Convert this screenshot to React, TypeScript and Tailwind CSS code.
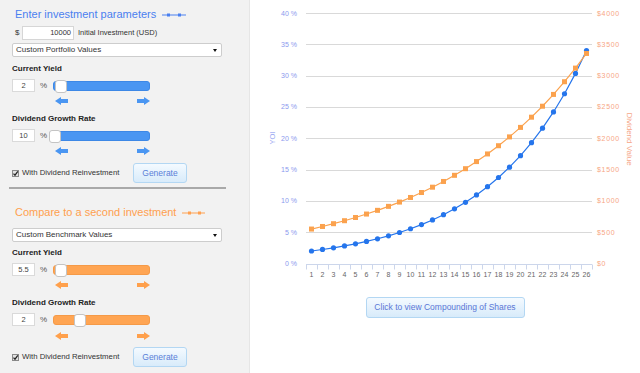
const blue = Array.from({ length: 26 }, (_, n) => 2 * Math.pow(1.12, n));
const orange = Array.from({ length: 26 }, (_, n) => 5.5 * Math.pow(1.075, n));

// plot area in chart-local coords
const X0 = 56;
const X1 = 342;
const CW = (X1 - X0) / 26;
const yOf = (v: number) => 263.5 - v * 6.2625;
const cx = (i: number) => X0 + (i + 0.5) * CW;

const ArrowLeft = ({ color }: { color: string }) => (
  <svg width="13" height="8" viewBox="0 0 13 8">
    <polygon points="0,4 6,0 6,2 13,2 13,6 6,6 6,8" fill={color} />
  </svg>
);

const ArrowRight = ({ color }: { color: string }) => (
  <svg width="13" height="8" viewBox="0 0 13 8">
    <polygon points="13,4 7,0 7,2 0,2 0,6 7,6 7,8" fill={color} />
  </svg>
);

const Slider = ({
  width,
  thumb,
  orange: isOrange,
}: {
  width: string;
  thumb: string;
  orange?: boolean;
}) => (
  <div
    className={`relative h-[10px] rounded-[3px] border ${width} ${
      isOrange ? 'bg-[#ffa553] border-[#f59a48]' : 'bg-[#4a96f2] border-[#3d88e6]'
    }`}
  >
    <div
      className={`absolute top-[-2px] h-[13px] w-[12px] rounded-[3px] border border-[#c4c4c4] bg-white ${thumb}`}
    />
  </div>
);

const SliderRow = ({
  value,
  pctWidth,
  sliderWidth,
  thumb,
  isOrange,
}: {
  value: string;
  pctWidth: string;
  sliderWidth: string;
  thumb: string;
  isOrange?: boolean;
}) => (
  <div className="flex h-[13px] items-center">
    <div className="flex h-[13px] w-[23px] items-center justify-center border border-[#dadada] bg-white text-[7.5px] text-[#444]">
      {value}
    </div>
    <span className={`pl-[5px] text-[8px] text-[#555] ${pctWidth}`}>%</span>
    <Slider width={sliderWidth} thumb={thumb} orange={isOrange} />
  </div>
);

const Arrows = ({ color }: { color: string }) => (
  <div className="flex h-[8px] pl-[43px]">
    <ArrowLeft color={color} />
    <div className="ml-[69px]">
      <ArrowRight color={color} />
    </div>
  </div>
);

const Label = ({ children }: { children: string }) => (
  <div className="h-[10px] text-[8px] font-bold leading-[10px] text-[#222]">{children}</div>
);

const Select = ({ children }: { children: string }) => (
  <div className="flex h-[14px] w-[210px] items-center justify-between rounded-[2px] border border-[#cdcdcd] bg-white pl-[3px] pr-[4px] text-[8px] text-[#333]">
    <span>{children}</span>
    <svg width="4" height="3" viewBox="0 0 4 3">
      <polygon points="0,0 4,0 2,3" fill="#111" />
    </svg>
  </div>
);

const CheckRow = () => (
  <div className="flex h-[20px] w-[175px] items-center justify-between">
    <div className="flex items-center">
      <svg width="7" height="7" viewBox="0 0 7 7">
        <rect x="0.5" y="0.5" width="6" height="6" fill="#e2e2e2" stroke="#8a8a8a" />
        <path d="M1.5 3.6 L3 5.2 L5.8 1.4" stroke="#222" strokeWidth="1.2" fill="none" />
      </svg>
      <span className="ml-[3px] text-[7.75px] text-[#333]">With Dividend Reinvestment</span>
    </div>
    <button className="h-[20px] w-[54px] rounded-[3px] border border-[#b3d7f3] bg-gradient-to-b from-[#f4faff] to-[#d8ebfa] text-[8.5px] text-[#5a7fd8]">
      Generate
    </button>
  </div>
);

const Chart = () => (
  <svg width="390" height="285" viewBox="0 0 390 285" fontFamily="'Liberation Sans', Arial, sans-serif">
    {[5, 10, 15, 20, 25, 30, 35, 40].map((v) => (
      <line
        key={v}
        x1={X0}
        x2={X1}
        y1={Math.round(yOf(v)) + 0.5}
        y2={Math.round(yOf(v)) + 0.5}
        stroke="#d9d9d9"
      />
    ))}
    <line x1={X0} x2={X1} y1={264.5} y2={264.5} stroke="#ccd6eb" />
    {Array.from({ length: 27 }, (_, i) => (
      <line
        key={i}
        x1={Math.round(X0 + i * CW) + 0.5}
        x2={Math.round(X0 + i * CW) + 0.5}
        y1={264.5}
        y2={269.5}
        stroke="#ccd6eb"
      />
    ))}
    {Array.from({ length: 26 }, (_, i) => (
      <text key={i} x={cx(i)} y={277} fontSize="7" fill="#666" textAnchor="middle">
        {i + 1}
      </text>
    ))}
    {[0, 5, 10, 15, 20, 25, 30, 35, 40].map((v) => (
      <text key={v} x={47} y={yOf(v) + 2.5} fontSize="7" fill="#8b99ee" textAnchor="end">
        {v} %
      </text>
    ))}
    {[0, 5, 10, 15, 20, 25, 30, 35, 40].map((v) => (
      <text key={v} x={347} y={yOf(v) + 2.5} fontSize="7" fill="#f7a684" letterSpacing="0.7">
        ${v * 100}
      </text>
    ))}
    <text x={25} y={138} fontSize="7.5" fill="#98a6f2" textAnchor="middle" transform="rotate(-90 25 138)">
      YOI
    </text>
    <text x={377} y={139} fontSize="8" fill="#f6a889" textAnchor="middle" transform="rotate(90 377 139)">
      Dividend Value
    </text>

    <polyline
      points={blue.map((v, i) => `${cx(i)},${yOf(v)}`).join(' ')}
      fill="none"
      stroke="#2575ec"
      strokeWidth="1.2"
    />
    {blue.map((v, i) => (
      <circle key={i} cx={cx(i)} cy={yOf(v)} r="2.6" fill="#2575ec" />
    ))}
    <polyline
      points={orange.map((v, i) => `${cx(i)},${yOf(v)}`).join(' ')}
      fill="none"
      stroke="#fba24e"
      strokeWidth="1.2"
    />
    {orange.map((v, i) => (
      <rect key={i} x={cx(i) - 2.5} y={yOf(v) - 2.5} width="5" height="5" fill="#fba24e" />
    ))}
  </svg>
);

const App = () => {
  return (
    <div className="flex h-[373px] w-[640px] overflow-hidden bg-white font-['Liberation_Sans',Arial,sans-serif]">
      {/* === Left: parameters === */}
      <div className="h-full w-[250px] shrink-0 border-r border-[#e6e6e6] bg-[#f2f2f2] pl-[12px] pt-[8px]">
        {/* first investment */}
        <div className="ml-[3px] flex h-[13px] items-center">
          <span className="text-[11px] leading-[13px] text-[#4a80f0]">Enter investment parameters</span>
          <svg width="24" height="6" viewBox="0 0 24 6" className="ml-[6px]">
            <line x1="0" x2="24" y1="3" y2="3" stroke="#4a80f0" />
            <rect x="5" y="1.5" width="3" height="3" fill="#4a80f0" />
            <rect x="16" y="1.5" width="3" height="3" fill="#4a80f0" />
          </svg>
        </div>
        <div className="mt-[5px] flex h-[14px] items-center">
          <span className="ml-[3px] w-[7px] text-[8px] text-[#333]">$</span>
          <div className="flex h-[14px] w-[52px] items-center justify-end border border-[#d6d6d6] bg-white pr-[2px] text-[7.5px] text-[#333]">
            10000
          </div>
          <span className="ml-[4px] text-[7.5px] text-[#333]">Initial Investment (USD)</span>
        </div>
        <div className="mt-[3px]">
          <Select>Custom Portfolio Values</Select>
        </div>
        <div className="mt-[7px]">
          <Label>Current Yield</Label>
        </div>
        <div className="mt-[5px]">
          <SliderRow value="2" pctWidth="w-[18px]" sliderWidth="w-[97px]" thumb="left-[1px]" />
        </div>
        <div className="mt-[5px]">
          <Arrows color="#4a96f2" />
        </div>
        <div className="mt-[9px]">
          <Label>Dividend Growth Rate</Label>
        </div>
        <div className="mt-[5px]">
          <SliderRow value="10" pctWidth="w-[14px]" sliderWidth="w-[101px]" thumb="left-[-1px]" />
        </div>
        <div className="mt-[5px]">
          <Arrows color="#4a96f2" />
        </div>
        <div className="mt-[8px]">
          <CheckRow />
        </div>
        <div className="ml-[-3px] mt-[4px] h-[2px] w-[217px] bg-[#a9a9a9]" />

        {/* second investment */}
        <div className="ml-[3px] mt-[17px] flex h-[13px] items-center">
          <span className="text-[11px] leading-[13px] text-[#ffa04f]">Compare to a second investment</span>
          <svg width="23" height="6" viewBox="0 0 23 6" className="ml-[6px]">
            <line x1="0" x2="23" y1="3" y2="3" stroke="#ffa04f" />
            <rect x="6" y="1.5" width="3" height="3" fill="#ffa04f" />
            <rect x="16" y="1.5" width="3" height="3" fill="#ffa04f" />
          </svg>
        </div>
        <div className="mt-[9px]">
          <Select>Custom Benchmark Values</Select>
        </div>
        <div className="mt-[6px]">
          <Label>Current Yield</Label>
        </div>
        <div className="mt-[5px]">
          <SliderRow value="5.5" pctWidth="w-[18px]" sliderWidth="w-[97px]" thumb="left-[1px]" isOrange />
        </div>
        <div className="mt-[5px]">
          <Arrows color="#ffa04c" />
        </div>
        <div className="mt-[9px]">
          <Label>Dividend Growth Rate</Label>
        </div>
        <div className="mt-[5px]">
          <SliderRow value="2" pctWidth="w-[18px]" sliderWidth="w-[97px]" thumb="left-[20px]" isOrange />
        </div>
        <div className="mt-[6px]">
          <Arrows color="#ffa04c" />
        </div>
        <div className="mt-[7px]">
          <CheckRow />
        </div>
      </div>

      {/* === Right: chart === */}
      <div className="flex flex-1 flex-col items-center">
        <Chart />
        <button className="mt-[12px] h-[21px] w-[159px] rounded-[3px] border border-[#b3d7f3] bg-gradient-to-b from-[#f4faff] to-[#d8ebfa] text-[8.5px] text-[#5a76d6]">
          Click to view Compounding of Shares
        </button>
      </div>
    </div>
  );
};

export default App;
